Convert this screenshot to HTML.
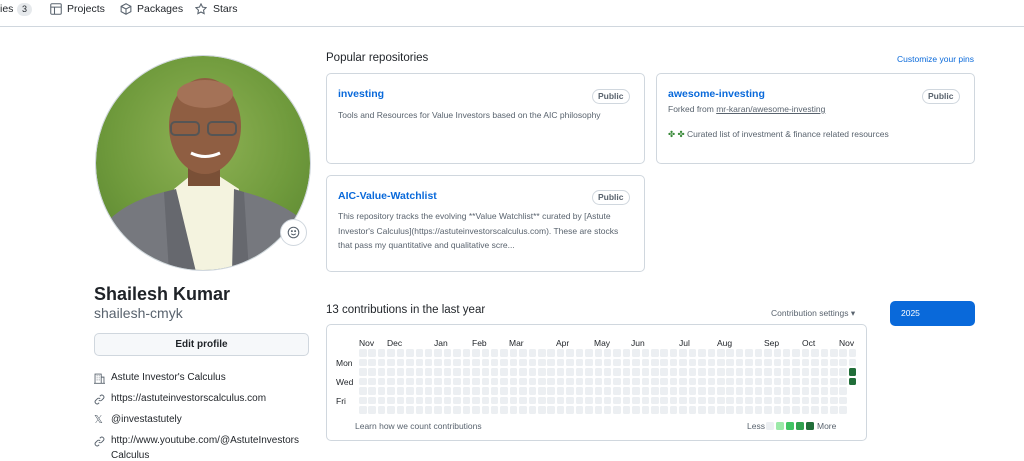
<!DOCTYPE html>
<html><head><meta charset="utf-8"><style>
*{margin:0;padding:0;box-sizing:border-box}
body{width:1024px;height:461px;overflow:hidden;background:#fff;font-family:"Liberation Sans",sans-serif;color:#1f2328;position:relative}
.a{position:absolute;white-space:nowrap}
.nav{font-size:10.5px;color:#1f2328}
.card{position:absolute;border:1px solid #d0d7de;border-radius:5px}
.repo{color:#0969da;font-weight:bold;font-size:10.5px}
.pub{position:absolute;border:1px solid #d0d7de;border-radius:9px;font-size:8.5px;font-weight:bold;color:#59636e;padding:1px 5px;line-height:11px}
.desc{font-size:8.5px;color:#59636e;line-height:14.5px}
.side{font-size:10px;color:#1f2328}
.cell{position:absolute;width:7.5px;height:7.5px;border-radius:1.5px;background:#eceff2}
</style></head><body>
<div class="a" style="left:0;top:26px;width:1024px;height:1px;background:#d0d7de"></div>
<div class="a nav" style="left:0;top:3px">ies</div>
<div class="a" style="left:17px;top:3px;width:15px;height:13px;border-radius:7px;background:#e6e9ec;font-size:9px;text-align:center;line-height:13px">3</div>
<svg class="a" style="left:50px;top:3px" width="12" height="12" viewBox="0 0 16 16" fill="none" stroke="#59636e" stroke-width="1.4"><rect x="1" y="1" width="14" height="14" rx="1.5"/><path d="M1 5.5h14M6 5.5V15"/></svg>
<div class="a nav" style="left:67px;top:3px">Projects</div>
<svg class="a" style="left:120px;top:3px" width="12" height="12" viewBox="0 0 16 16" fill="none" stroke="#59636e" stroke-width="1.4"><path d="M8 1l6.5 3.5v7L8 15l-6.5-3.5v-7z M1.5 4.5L8 8l6.5-3.5M8 8v7"/></svg>
<div class="a nav" style="left:137px;top:3px">Packages</div>
<svg class="a" style="left:195px;top:3px" width="12" height="12" viewBox="0 0 16 16" fill="none" stroke="#59636e" stroke-width="1.4"><path d="M8 1.2l2.1 4.3 4.7.7-3.4 3.3.8 4.7L8 12 3.8 14.2l.8-4.7L1.2 6.2l4.7-.7z"/></svg>
<div class="a nav" style="left:213px;top:3px">Stars</div>

<svg class="a" style="left:94px;top:54px" width="218" height="218" viewBox="0 0 218 218">
<defs><clipPath id="c"><circle cx="109" cy="109" r="107"/></clipPath>
<radialGradient id="bg" cx="0.5" cy="0.4" r="0.7"><stop offset="0" stop-color="#8fb255"/><stop offset="0.6" stop-color="#6f9a3c"/><stop offset="1" stop-color="#5a8530"/></radialGradient></defs>
<g clip-path="url(#c)">
<rect width="218" height="218" fill="url(#bg)"/>
<path d="M0 185 Q20 150 70 138 L150 138 Q195 150 218 175 L218 218 L0 218z" fill="#76787e"/>
<path d="M80 135 L102 218 L138 218 L145 135 L125 122 L96 122z" fill="#f4f3df"/>
<path d="M70 138 L82 135 L102 218 L75 218z M150 138 L140 135 L138 218 L155 218z" fill="#66686e"/>
<rect x="94" y="100" width="32" height="32" fill="#7a5037"/>
<ellipse cx="111" cy="72" rx="36" ry="48" fill="#8f5e42"/>
<ellipse cx="111" cy="40" rx="28" ry="14" fill="#a47257"/>
<rect x="77" y="68" width="28" height="13" rx="4" fill="none" stroke="#555" stroke-width="2"/>
<rect x="114" y="68" width="28" height="13" rx="4" fill="none" stroke="#555" stroke-width="2"/>
<path d="M97 99 Q111 106 126 99" stroke="#fff" stroke-width="3" fill="none"/>
</g>
<circle cx="109" cy="109" r="107.5" fill="none" stroke="#d0d7de"/>
</svg>
<div class="a" style="left:280px;top:219px;width:27px;height:27px;border-radius:50%;background:#fff;border:1px solid #d0d7de"></div>
<svg class="a" style="left:287px;top:226px" width="13" height="13" viewBox="0 0 16 16" fill="none" stroke="#59636e" stroke-width="1.3"><circle cx="8" cy="8" r="6.5"/><path d="M5.2 9.5q2.8 2.6 5.6 0"/><circle cx="6" cy="6.3" r=".6" fill="#59636e"/><circle cx="10" cy="6.3" r=".6" fill="#59636e"/></svg>

<div class="a" style="left:94px;top:284px;font-size:18px;font-weight:bold">Shailesh Kumar</div>
<div class="a" style="left:94px;top:305px;font-size:14px;color:#59636e">shailesh-cmyk</div>
<div class="a" style="left:94px;top:333px;width:215px;height:23px;border:1px solid #d0d7de;border-radius:5px;background:#f6f8fa;font-size:10px;font-weight:bold;text-align:center;line-height:21px">Edit profile</div>
<svg class="a" style="left:94px;top:373px" width="11" height="11" viewBox="0 0 16 16" fill="none" stroke="#59636e" stroke-width="1.3"><path d="M1.5 15V1.5h9V15M10.5 6h4v9M0 15h16M4 4h1M7 4h1M4 7h1M7 7h1M4 10h1M7 10h1"/></svg>
<div class="a side" style="left:111px;top:372px">Astute Investor's Calculus</div>
<svg class="a" style="left:94px;top:394px" width="11" height="11" viewBox="0 0 16 16" fill="none" stroke="#59636e" stroke-width="1.4"><path d="M7 9a3 3 0 004.2 0l2.6-2.6a3 3 0 00-4.2-4.2L8.5 3.3M9 7a3 3 0 00-4.2 0L2.2 9.6a3 3 0 004.2 4.2l1.1-1.1"/></svg>
<div class="a side" style="left:111px;top:393px">https://astuteinvestorscalculus.com</div>
<div class="a" style="left:94px;top:413px;font-size:11px;color:#59636e">𝕏</div>
<div class="a side" style="left:111px;top:414px">@investastutely</div>
<svg class="a" style="left:94px;top:436px" width="11" height="11" viewBox="0 0 16 16" fill="none" stroke="#59636e" stroke-width="1.4"><path d="M7 9a3 3 0 004.2 0l2.6-2.6a3 3 0 00-4.2-4.2L8.5 3.3M9 7a3 3 0 00-4.2 0L2.2 9.6a3 3 0 004.2 4.2l1.1-1.1"/></svg>
<div class="a side" style="left:111px;top:435px">http://www.youtube.com/@AstuteInvestors</div>
<div class="a side" style="left:111px;top:450px">Calculus</div>

<div class="a" style="left:326px;top:52px;font-size:11.5px">Popular repositories</div>
<div class="a" style="left:897px;top:54px;font-size:8.5px;color:#0969da">Customize your pins</div>

<div class="card" style="left:326px;top:73px;width:319px;height:91px"></div>
<div class="a repo" style="left:338px;top:88px">investing</div>
<div class="pub" style="left:592px;top:89px">Public</div>
<div class="a desc" style="left:338px;top:108px">Tools and Resources for Value Investors based on the AIC philosophy</div>

<div class="card" style="left:656px;top:73px;width:319px;height:91px"></div>
<div class="a repo" style="left:668px;top:88px">awesome-investing</div>
<div class="pub" style="left:922px;top:89px">Public</div>
<div class="a desc" style="left:668px;top:102px">Forked from <span style="text-decoration:underline;color:#59636e">mr-karan/awesome-investing</span></div>
<div class="a desc" style="left:668px;top:127px"><span style="color:#3a8a3a">✤ ✤</span> Curated list of investment &amp; finance related resources</div>

<div class="card" style="left:326px;top:175px;width:319px;height:97px"></div>
<div class="a repo" style="left:338px;top:190px">AIC-Value-Watchlist</div>
<div class="pub" style="left:592px;top:190px">Public</div>
<div class="a desc" style="left:338px;top:209px">This repository tracks the evolving **Value Watchlist** curated by [Astute<br>Investor's Calculus](https://astuteinvestorscalculus.com). These are stocks<br>that pass my quantitative and qualitative scre...</div>

<div class="a" style="left:326px;top:304px;font-size:11.5px">13 contributions in the last year</div>
<div class="a" style="left:771px;top:308px;font-size:8.5px;color:#59636e">Contribution settings ▾</div>
<div class="a" style="left:890px;top:301px;width:85px;height:25px;border-radius:5px;background:#0969da;color:#fff;font-size:8.5px;line-height:25px;padding-left:11px">2025</div>

<div class="card" style="left:326px;top:324px;width:541px;height:117px"></div>
<div id="g"></div>
<div class="a desc" style="left:336px;top:356px;color:#1f2328">Mon</div>
<div class="a desc" style="left:336px;top:375px;color:#1f2328">Wed</div>
<div class="a desc" style="left:336px;top:394px;color:#1f2328">Fri</div>
<div class="a desc" style="left:355px;top:419px">Learn how we count contributions</div>
<div class="a desc" style="left:747px;top:419px">Less</div>
<div class="cell" style="left:766px;top:422px"></div>
<div class="cell" style="left:776px;top:422px;background:#9be9a8"></div>
<div class="cell" style="left:786px;top:422px;background:#40c463"></div>
<div class="cell" style="left:796px;top:422px;background:#30a14e"></div>
<div class="cell" style="left:806px;top:422px;background:#216e39"></div>
<div class="a desc" style="left:817px;top:419px">More</div>
<script>
var h='',m=[['Nov',359],['Dec',387],['Jan',434],['Feb',472],['Mar',509],['Apr',556],['May',594],['Jun',631],['Jul',679],['Aug',717],['Sep',764],['Oct',802],['Nov',839]];
m.forEach(function(x){h+='<div class="a desc" style="left:'+x[1]+'px;top:336px;color:#1f2328">'+x[0]+'</div>'});
for(var c=0;c<53;c++)for(var r=0;r<7;r++){if(c==52&&r>3)continue;var bg=(c==52&&(r==2||r==3))?'background:#216e39;':'';
h+='<div class="cell" style="left:'+(359+c*9.42).toFixed(1)+'px;top:'+(349+r*9.5)+'px;'+bg+'"></div>'}
document.getElementById('g').innerHTML=h;
</script>
</body></html>
